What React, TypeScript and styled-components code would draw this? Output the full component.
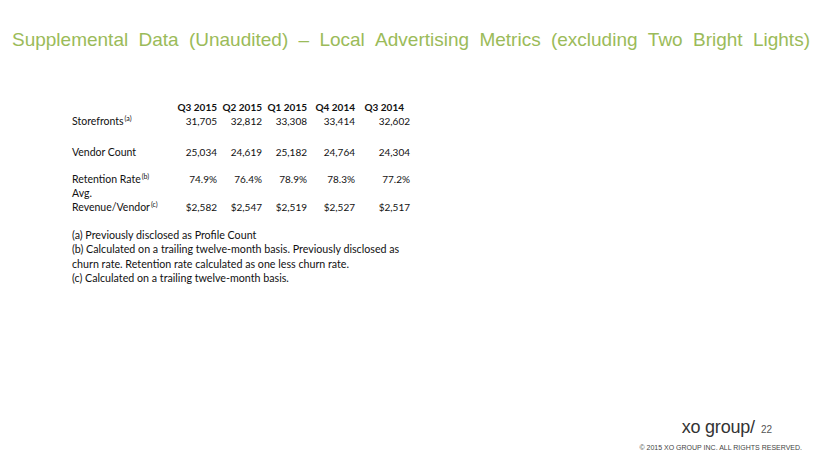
import React from 'react';
import styled, { createGlobalStyle } from 'styled-components';

const GlobalStyle = createGlobalStyle`
  html, body {
    margin: 0;
    padding: 0;
    background: #fff;
  }
`;

const Slide = styled.div`
  width: 820px;
  height: 461px;
  box-sizing: border-box;
  padding: 28px 10px 10px 12px;
  display: flex;
  flex-direction: column;
  background: #fff;
  overflow: hidden;
`;

const Title = styled.h1`
  margin: 0;
  font-family: 'Liberation Sans', Arial, sans-serif;
  font-weight: 400;
  font-size: 19px;
  line-height: 24px;
  color: #9bbb59;
  white-space: nowrap;
  display: flex;
  justify-content: space-between;
`;

const Body = styled.div`
  flex: 1;
  margin-top: 48px;
  padding-left: 60px;
  font-family: Lato, 'Open Sans', sans-serif;
  font-size: 10px;
  color: #111;
`;

const Table = styled.div`
  display: flex;
  flex-direction: column;
`;

const Row = styled.div<{ $gap?: number }>`
  display: grid;
  grid-template-columns: 100px 45px 45px 45px 48px 55px;
  align-items: end;
  line-height: 14px;
  margin-top: ${(p) => p.$gap || 0}px;
`;

const Label = styled.div`
  white-space: nowrap;
  font-size: 10.5px;
`;

const HeadCell = styled.div<{ $pad?: number }>`
  font-weight: 700;
  text-align: right;
  white-space: nowrap;
  padding-right: ${(p) => p.$pad || 0}px;
`;

const Cell = styled.div`
  text-align: right;
  white-space: nowrap;
`;

const Sup = styled.sup`
  font-size: 7px;
  line-height: 0;
  vertical-align: 4px;
  margin-left: 1px;
`;

const Notes = styled.div`
  margin-top: 14px;
  line-height: 14.4px;
  font-size: 10.7px;
`;

const Footer = styled.div`
  display: flex;
  flex-direction: column;
  align-items: flex-end;
  padding-right: 8px;
  gap: 6px;
`;

const LogoRow = styled.div`
  display: flex;
  align-items: baseline;
  gap: 6px;
  padding-right: 30px;
`;

const Logo = styled.span`
  font-family: 'Liberation Sans', Arial, sans-serif;
  font-size: 18px;
  font-weight: 300;
  color: #333;
  letter-spacing: -0.2px;
`;

const PageNum = styled.span`
  font-family: 'Liberation Sans', Arial, sans-serif;
  font-size: 10px;
  color: #555;
`;

const Copyright = styled.div`
  font-family: 'Liberation Sans', Arial, sans-serif;
  font-size: 7px;
  color: #444;
  white-space: nowrap;
`;

const quarters = ['Q3 2015', 'Q2 2015', 'Q1 2015', 'Q4 2014', 'Q3 2014'];

const rows: { label: React.ReactNode; values: string[]; gap: number }[] = [
  { label: <>Storefronts<Sup>(a)</Sup></>, values: ['31,705', '32,812', '33,308', '33,414', '32,602'], gap: 0 },
  { label: 'Vendor Count', values: ['25,034', '24,619', '25,182', '24,764', '24,304'], gap: 17 },
  { label: <>Retention Rate<Sup>(b)</Sup></>, values: ['74.9%', '76.4%', '78.9%', '78.3%', '77.2%'], gap: 13 },
  {
    label: <>Avg.<br />Revenue/Vendor<Sup>(c)</Sup></>,
    values: ['$2,582', '$2,547', '$2,519', '$2,527', '$2,517'],
    gap: 0,
  },
];

export default function App() {
  return (
    <>
      <GlobalStyle />
      <Slide>
        <Title>
          {'Supplemental Data (Unaudited) – Local Advertising Metrics (excluding Two Bright Lights)'
            .split(' ')
            .map((w, i) => (
              <span key={i}>{w}</span>
            ))}
        </Title>
        <Body>
          <Table>
            <Row>
              <Label />
              {quarters.map((q, i) => (
                <HeadCell key={q} $pad={i === 4 ? 6 : 0}>
                  {q}
                </HeadCell>
              ))}
            </Row>
            {rows.map((r, i) => (
              <Row key={i} $gap={r.gap}>
                <Label>{r.label}</Label>
                {r.values.map((v, j) => (
                  <Cell key={j}>{v}</Cell>
                ))}
              </Row>
            ))}
          </Table>
          <Notes>
            <div>(a) Previously disclosed as Profile Count</div>
            <div>(b) Calculated on a trailing twelve-month basis. Previously disclosed as</div>
            <div>churn rate. Retention rate calculated as one less churn rate.</div>
            <div>(c) Calculated on a trailing twelve-month basis.</div>
          </Notes>
        </Body>
        <Footer>
          <LogoRow>
            <Logo>xo group/</Logo>
            <PageNum>22</PageNum>
          </LogoRow>
          <Copyright>© 2015 XO GROUP INC. ALL RIGHTS RESERVED.</Copyright>
        </Footer>
      </Slide>
    </>
  );
}
